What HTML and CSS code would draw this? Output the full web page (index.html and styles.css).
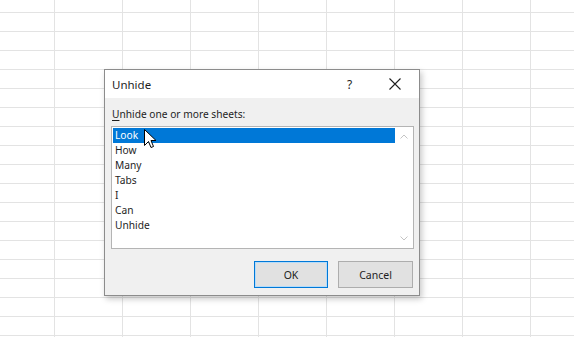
FILE: index.html
```html
<!DOCTYPE html>
<html lang="en">
  <head>
    <meta charset="utf-8" />
    <title>Unhide</title>
    <link rel="stylesheet" href="styles.css">
  </head>
  <body>
    <div class="sheet">
      <div class="dialog">
        <div class="titlebar">
          <span class="title">Unhide</span>
          <span class="help">?</span>
          <span class="close">
            <svg width="12" height="12" viewBox="0 0 12 12"><path d="M0.5 0.5 L11.5 11.5 M11.5 0.5 L0.5 11.5" stroke="#1e1e1e" stroke-width="1.1" fill="none"/></svg>
          </span>
        </div>
        <div class="body">
          <p class="label"><u>U</u>nhide one or more sheets:</p>
          <div class="listbox">
            <ul class="items">
              <li class="selected">Look</li>
              <li>How</li>
              <li>Many</li>
              <li>Tabs</li>
              <li>I</li>
              <li>Can</li>
              <li>Unhide</li>
            </ul>
            <div class="scrollbar">
              <svg width="8" height="5" viewBox="0 0 8 5"><path d="M0.5 4.5 L4 1 L7.5 4.5" stroke="#c4c4c4" fill="none"/></svg>
              <svg width="8" height="5" viewBox="0 0 8 5"><path d="M0.5 0.5 L4 4 L7.5 0.5" stroke="#c4c4c4" fill="none"/></svg>
            </div>
            <svg class="cursor" width="13" height="20" viewBox="0 0 13 20">
              <path d="M0.5 0.5 L0.5 16.5 L4.5 12.5 L7 18.5 L9.5 17.5 L7 11.5 L12 11.5 Z" fill="#fff" stroke="#000" stroke-width="1" stroke-linejoin="miter"/>
            </svg>
          </div>
          <div class="buttons">
            <button class="btn default">OK</button>
            <button class="btn">Cancel</button>
          </div>
        </div>
      </div>
    </div>
  </body>
</html>
```

FILE: styles.css
```css
html, body {
  margin: 0;
  height: 100%;
}
body {
  font-family: "Noto Sans", "Open Sans", sans-serif;
  color: #1e1e1e;
}
.sheet {
  height: 100%;
  box-sizing: border-box;
  padding: 69px 0 0 104px;
  background-color: #fff;
  background-image:
    linear-gradient(to right, #e3e3e3 1px, transparent 1px),
    linear-gradient(#e3e3e3 1px, transparent 1px);
  background-size: 68px 19px;
  background-position: 54px 12px;
}
.dialog {
  width: 316px;
  height: 227px;
  box-sizing: border-box;
  border: 1px solid #8c8c8c;
  background: #f0f0f0;
  box-shadow: 2px 3px 6px rgba(0, 0, 0, 0.22);
  display: flex;
  flex-direction: column;
}
.titlebar {
  height: 28px;
  background: #fff;
  display: flex;
  align-items: center;
  padding-left: 7px;
}
.title {
  font-size: 11.5px;
  flex: 1;
}
.help {
  font-size: 12px;
  width: 10px;
  margin-right: 32px;
}
.close {
  display: flex;
  width: 12px;
  margin-right: 18px;
}
.body {
  flex: 1;
  padding: 9px 5px 0 6px;
}
.label {
  margin: 0 0 5px 1px;
  font-size: 10.2px;
  line-height: 14px;
}
.label u {
  text-decoration-thickness: 1px;
  text-underline-offset: 2px;
}
.listbox {
  position: relative;
  height: 123px;
  box-sizing: border-box;
  border: 1px solid #b4b4b4;
  background: #fff;
  display: flex;
  padding: 1px 0 1px 1px;
}
.items {
  list-style: none;
  margin: 0;
  padding: 0;
  flex: 1;
  font-size: 10.2px;
}
.items li {
  height: 15px;
  line-height: 15px;
  padding-left: 2px;
}
.items li.selected {
  background: #0078d7;
  color: #fff;
}
.scrollbar {
  width: 18px;
  display: flex;
  flex-direction: column;
  justify-content: space-between;
  align-items: center;
  padding: 6px 0 6px;
}
.cursor {
  position: absolute;
  left: 32px;
  top: 2px;
}
.buttons {
  display: flex;
  justify-content: flex-end;
  gap: 10px;
  margin-top: 12px;
  padding-right: 1px;
}
.btn {
  width: 75px;
  height: 27px;
  font-family: inherit;
  font-size: 10.5px;
  color: #1e1e1e;
  background: #e1e1e1;
  border: 1px solid #adadad;
  padding: 0;
}
.btn.default {
  width: 74px;
  border: 1px solid #0078d7;
  box-shadow: inset 0 0 0 1px #b5dcfa;
}
```
